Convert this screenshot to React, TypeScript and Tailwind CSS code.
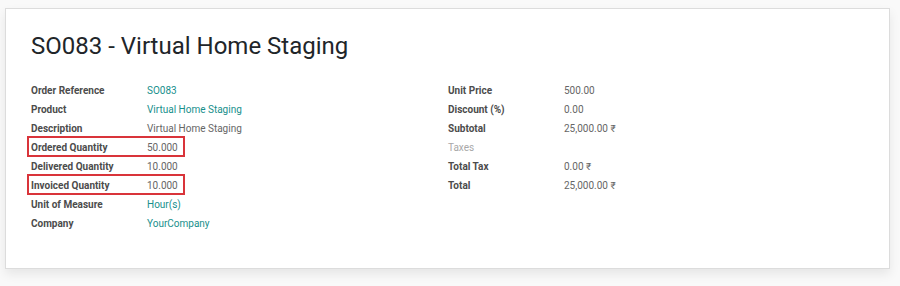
const leftRows = [
  { label: "Order Reference", value: "SO083", link: true },
  { label: "Product", value: "Virtual Home Staging", link: true },
  { label: "Description", value: "Virtual Home Staging" },
  { label: "Ordered Quantity", value: "50.000", marked: true },
  { label: "Delivered Quantity", value: "10.000" },
  { label: "Invoiced Quantity", value: "10.000", marked: true },
  { label: "Unit of Measure", value: "Hour(s)", link: true },
  { label: "Company", value: "YourCompany", link: true },
]

const rightRows = [
  { label: "Unit Price", value: "500.00" },
  { label: "Discount (%)", value: "0.00" },
  { label: "Subtotal", value: "25,000.00 ₹" },
  { label: "Taxes", value: "", muted: true },
  { label: "Total Tax", value: "0.00 ₹" },
  { label: "Total", value: "25,000.00 ₹" },
]

type Row = { label: string; value: string; link?: boolean; marked?: boolean; muted?: boolean }

function Field({ row }: { row: Row }) {
  return (
    <div className="relative flex h-[19px] items-center">
      {row.marked && (
        <div className="absolute left-[-4px] top-[-2px] h-[21px] w-[158px] border-2 border-[#d9343a]" />
      )}
      <div
        className={
          row.muted
            ? "w-[116px] shrink-0 text-[#a8a8a8]"
            : "w-[116px] shrink-0 font-bold text-[#4c4c4c]"
        }
      >
        {row.label}
      </div>
      <div className={row.link ? "text-[#178f8c]" : "text-[#666666]"}>{row.value}</div>
    </div>
  )
}

export default function App() {
  return (
    <div className="h-[286px] w-[900px] bg-[#f9f9f9] pl-[5px] pt-[8px] font-['Roboto',sans-serif]">
      <div className="h-[261px] w-[885px] border border-[#dcdcdc] bg-white px-[25px] pt-[21px] shadow-[0_5px_10px_rgba(0,0,0,0.08)]">
        <h1 className="text-[24px] leading-[32px] text-[#212529]">SO083 - Virtual Home Staging</h1>
        <div className="mt-[19px] flex text-[10px]">
          <div className="w-[417px]">
            {leftRows.map((row) => (
              <Field key={row.label} row={row} />
            ))}
          </div>
          <div className="flex-1">
            {rightRows.map((row) => (
              <Field key={row.label} row={row} />
            ))}
          </div>
        </div>
      </div>
    </div>
  )
}
